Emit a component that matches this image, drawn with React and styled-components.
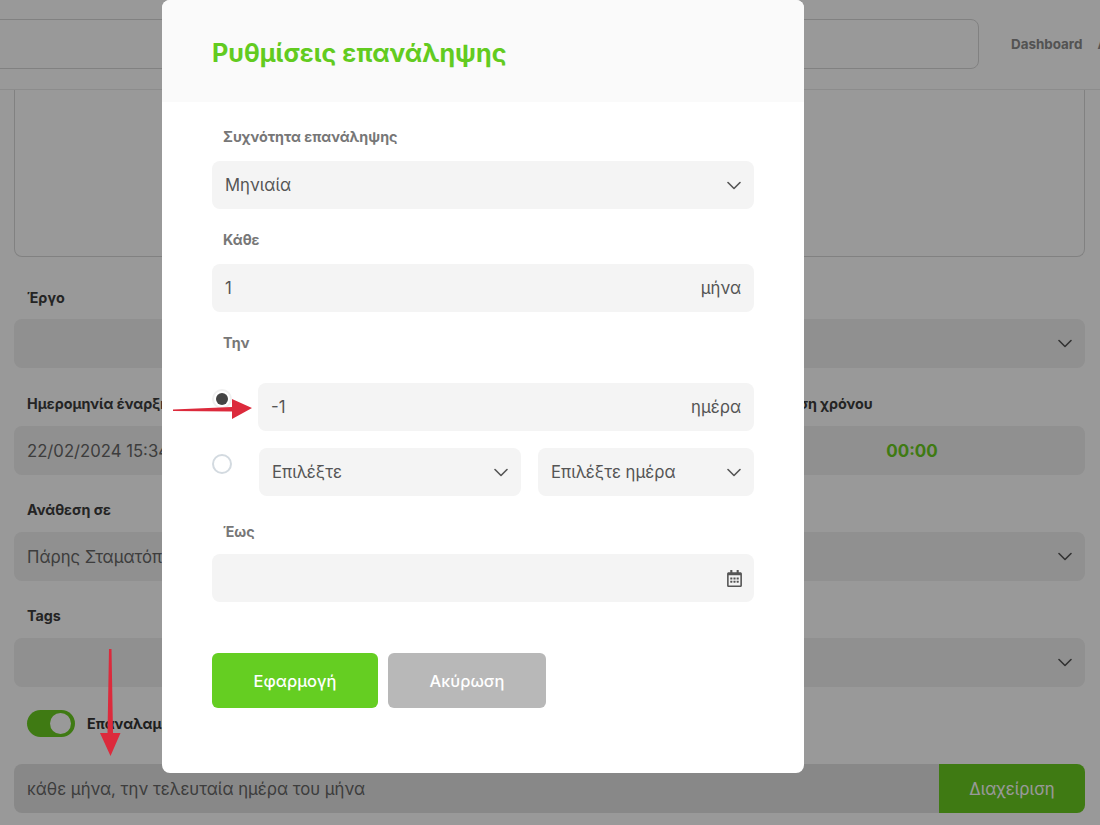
import React from "react";
import styled, { createGlobalStyle } from "styled-components";
import { FaRegCalendarAlt } from "react-icons/fa";

const GlobalStyle = createGlobalStyle`
  html, body {
    margin: 0;
    height: 825px;
    overflow: hidden;
    background: #fff;
    font-family: Inter, "Noto Sans", sans-serif;
  }
`;

const Page = styled.div`
  position: relative;
  width: 1100px;
  height: 825px;
  overflow: hidden;
`;

const TopBar = styled.header`
  display: flex;
  align-items: center;
  gap: 32px;
  box-sizing: border-box;
  height: 90px;
  padding-bottom: 2px;
  border-bottom: 1px solid #e9e9e9;
  margin-left: -10px;
  white-space: nowrap;
`;

const SearchBox = styled.div`
  flex: 0 0 989px;
  box-sizing: border-box;
  height: 50px;
  border: 1px solid #d8d8d8;
  border-radius: 8px;
`;

const NavLinks = styled.nav`
  display: flex;
  gap: 15px;
`;

const NavLink = styled.span`
  font-size: 13.400px;
  font-weight: 700;
  color: #8a8a8a;
`;

const Content = styled.main`
  display: flex;
  flex-direction: column;
  padding: 0 15px 0 14px;
`;

const NotesBox = styled.div`
  height: 167px;
  box-sizing: border-box;
  border: 1px solid #d8d8d8;
  border-top: 0;
  border-radius: 0 0 8px 8px;
  margin-bottom: 31px;
`;

const FormLabel = styled.div`
  height: 20px;
  line-height: 20px;
  padding-left: 13px;
  margin-bottom: ${(p) => p.$gap || 12}px;
  font-size: 14.300px;
  font-weight: 700;
  color: #3c3c3c;
  white-space: nowrap;
`;

const FormField = styled.div`
  display: flex;
  align-items: center;
  justify-content: ${(p) => (p.$center ? "center" : "space-between")};
  box-sizing: border-box;
  height: 49px;
  padding: 0 13px;
  margin-bottom: ${(p) => p.$after || 25}px;
  border-radius: 8px;
  background: #f0f0f0;
  font-size: 16.700px;
  color: #666;
  white-space: nowrap;
`;

const FieldRow = styled.div`
  display: grid;
  grid-template-columns: 1fr 346px;
  gap: 20px;
`;

const TimeValue = styled.span`
  font-weight: 700;
  font-size: 17px;
  color: #69cc21;
`;

const ToggleRow = styled.div`
  display: flex;
  align-items: center;
  gap: 12px;
  padding-left: 13px;
  margin: -2px 0 27px;
`;

const Toggle = styled.span`
  display: flex;
  align-items: center;
  justify-content: flex-end;
  box-sizing: border-box;
  width: 48px;
  height: 27px;
  padding: 0 4px;
  border-radius: 14px;
  background: #69cc21;
  &::after {
    content: "";
    width: 21px;
    height: 21px;
    border-radius: 50%;
    background: #fff;
  }
`;

const ToggleText = styled.span`
  font-size: 14.300px;
  font-weight: 700;
  color: #333;
`;

const SummaryRow = styled.div`
  display: flex;
  height: 49px;
`;

const SummaryText = styled.div`
  flex: 1;
  display: flex;
  align-items: center;
  padding-left: 13px;
  border-radius: 8px 0 0 8px;
  background: #e3e3e3;
  font-size: 16.700px;
  color: #666;
`;

const ManageButton = styled.div`
  flex: 0 0 146px;
  display: flex;
  align-items: center;
  justify-content: center;
  border-radius: 0 8px 8px 0;
  background: #69cc21;
  font-size: 16.700px;
  color: #fff;
`;

const Overlay = styled.div`
  position: absolute;
  inset: 0;
  background: rgba(0, 0, 0, 0.4);
`;

const Modal = styled.section`
  position: absolute;
  left: 162px;
  top: 0;
  width: 642px;
  height: 773px;
  border-radius: 8px;
  background: #fff;
  overflow: hidden;
`;

const ModalHeader = styled.div`
  display: flex;
  align-items: center;
  box-sizing: border-box;
  height: 102px;
  padding: 3px 50px 0;
  background: #fafafa;
`;

const ModalTitle = styled.h2`
  margin: 0;
  font-size: 25.200px;
  font-weight: 700;
  color: #62cb20;
`;

const ModalBody = styled.div`
  display: flex;
  flex-direction: column;
  padding: 25px 50px 0;
`;

const ModalLabel = styled.div`
  height: 20px;
  line-height: 20px;
  padding-left: 11px;
  margin-bottom: ${(p) => p.$gap || 14}px;
  font-size: 14.300px;
  font-weight: 700;
  color: #777;
`;

const ModalField = styled.div`
  flex: ${(p) => p.$flex || "none"};
  display: flex;
  align-items: center;
  justify-content: space-between;
  box-sizing: border-box;
  height: 48px;
  padding: 0 13px;
  margin-bottom: ${(p) => p.$after ?? 21}px;
  border-radius: 8px;
  background: #f4f4f4;
  font-size: 16.700px;
  color: #555;
`;

const RadioRow = styled.div`
  display: flex;
  gap: 26px;
  margin-bottom: ${(p) => p.$after}px;
`;

const Radio = styled.span`
  flex: 0 0 20px;
  display: flex;
  align-items: center;
  justify-content: center;
  box-sizing: border-box;
  width: 20px;
  height: 20px;
  margin-top: 6px;
  border-radius: 50%;
  border: 2px solid ${(p) => (p.$checked ? "#f0f0f0" : "#d3dae0")};
  background: #fff;
  &::after {
    content: "";
    display: ${(p) => (p.$checked ? "block" : "none")};
    width: 12px;
    height: 12px;
    border-radius: 50%;
    background: #444;
  }
`;

const SelectPair = styled.div`
  flex: 1;
  display: grid;
  grid-template-columns: 262px 216px;
  gap: 17px;
  margin-left: 1px;
`;

const ButtonRow = styled.div`
  display: flex;
  gap: 10px;
  margin-top: 30px;
`;

const ModalButton = styled.div`
  display: flex;
  align-items: center;
  justify-content: center;
  width: ${(p) => p.$width}px;
  height: 55px;
  border-radius: 6px;
  background: ${(p) => (p.$primary ? "#65ce22" : "#b8b8b8")};
  font-size: 16.500px;
  font-weight: 500;
  color: #fff;
`;

const CalendarIcon = styled(FaRegCalendarAlt)`
  margin-right: -2px;
  color: #555;
`;

const ArrowLayer = styled.svg`
  position: absolute;
  inset: 0;
  width: 1100px;
  height: 825px;
  pointer-events: none;
`;

const Chevron = () => (
  <svg width="14" height="9" viewBox="0 0 14 9" fill="none" stroke="#555" strokeWidth="1.6" strokeLinecap="round" strokeLinejoin="round">
    <path d="M1 1.500 7 7.500l6-6" />
  </svg>
);

export default function App() {
  return (
    <Page>
      <GlobalStyle />
      <TopBar>
        <SearchBox />
        <NavLinks>
          <NavLink>Dashboard</NavLink>
          <NavLink>Αναφορές</NavLink>
        </NavLinks>
      </TopBar>
      <Content>
        <NotesBox />
        <FormLabel $gap={11}>Έργο</FormLabel>
        <FormField $after={26}>
          <span />
          <Chevron />
        </FormField>
        <FieldRow>
          <div>
            <FormLabel>Ημερομηνία έναρξης</FormLabel>
            <FormField>22/02/2024 15:34</FormField>
          </div>
          <div>
            <FormLabel>Εκτίμηση χρόνου</FormLabel>
            <FormField $center>
              <TimeValue>00:00</TimeValue>
            </FormField>
          </div>
        </FieldRow>
        <FormLabel>Ανάθεση σε</FormLabel>
        <FormField>
          Πάρης Σταματόπουλος
          <Chevron />
        </FormField>
        <FormLabel>Tags</FormLabel>
        <FormField>
          <span />
          <Chevron />
        </FormField>
        <ToggleRow>
          <Toggle />
          <ToggleText>Επαναλαμβανόμενη</ToggleText>
        </ToggleRow>
        <SummaryRow>
          <SummaryText>κάθε μήνα, την τελευταία ημέρα του μήνα</SummaryText>
          <ManageButton>Διαχείριση</ManageButton>
        </SummaryRow>
      </Content>

      <Overlay />

      <Modal>
        <ModalHeader>
          <ModalTitle>Ρυθμίσεις επανάληψης</ModalTitle>
        </ModalHeader>
        <ModalBody>
          <ModalLabel>Συχνότητα επανάληψης</ModalLabel>
          <ModalField>
            Μηνιαία
            <Chevron />
          </ModalField>
          <ModalLabel>Κάθε</ModalLabel>
          <ModalField>
            1<span>μήνα</span>
          </ModalField>
          <ModalLabel $gap={30}>Την</ModalLabel>
          <RadioRow $after={17}>
            <Radio $checked />
            <ModalField $flex="1" $after={0}>
              -1<span>ημέρα</span>
            </ModalField>
          </RadioRow>
          <RadioRow $after={26}>
            <Radio />
            <SelectPair>
              <ModalField $after={0}>
                Επιλέξτε
                <Chevron />
              </ModalField>
              <ModalField $after={0}>
                Επιλέξτε ημέρα
                <Chevron />
              </ModalField>
            </SelectPair>
          </RadioRow>
          <ModalLabel $gap={12}>Έως</ModalLabel>
          <ModalField>
            <span />
            <CalendarIcon size={17} />
          </ModalField>
          <ButtonRow>
            <ModalButton $primary $width={166}>Εφαρμογή</ModalButton>
            <ModalButton $width={158}>Ακύρωση</ModalButton>
          </ButtonRow>
        </ModalBody>
      </Modal>

      <ArrowLayer viewBox="0 0 1100 825">
        <path d="M173 409.500 232 407V399L252 408 232 419V411.500L173 411z" fill="#dc2a3c" />
        <path d="M109 649H111.500L113 733H120.500L110.500 756 100 733H107.500z" fill="#dc2a3c" />
      </ArrowLayer>
    </Page>
  );
}
